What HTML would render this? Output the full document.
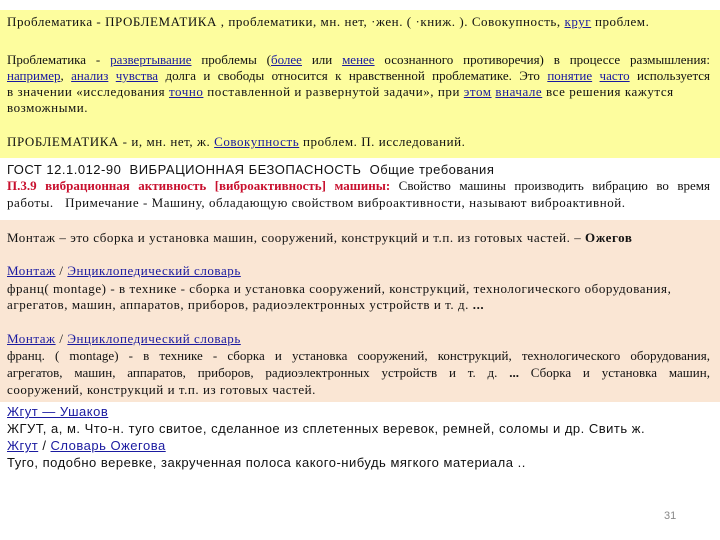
<html><head><style>
body{margin:0;width:720px;height:540px;background:#fff;position:relative;overflow:hidden;font-family:"Liberation Serif",serif;font-size:13px;color:#111}
.l{position:absolute;left:7px;white-space:nowrap;line-height:16px;letter-spacing:0.55px}
a{color:#1a1aa0;text-decoration:underline}
.s{font-family:"Liberation Sans",sans-serif;letter-spacing:0.5px}
.j{white-space:normal;width:703px;text-align:justify;text-align-last:justify;letter-spacing:0}
</style></head><body>
<div style="position:absolute;left:0;top:10px;width:720px;height:148px;background:#fdfd9e"></div>
<div style="position:absolute;left:0;top:220px;width:720px;height:182px;background:#fae6d4"></div>
<div class="l" style="top:14px">Проблематика - ПРОБЛЕМАТИКА , проблематики, мн. нет, ·жен. ( ·книж. ). Совокупность, <a>круг</a> проблем.</div>
<div class="l j" style="top:52px">Проблематика - <a>развертывание</a> проблемы (<a>более</a> или <a>менее</a> осознанного противоречия) в процессе размышления:</div>
<div class="l j" style="top:68px"><a>например</a>, <a>анализ</a> <a>чувства</a> долга и свободы относится к нравственной проблематике. Это <a>понятие</a> <a>часто</a> используется</div>
<div class="l" style="top:84px">в значении «исследования <a>точно</a> поставленной и развернутой задачи», при <a>этом</a> <a>вначале</a> все решения кажутся</div>
<div class="l" style="top:100px">возможными.</div>
<div class="l" style="top:134px">ПРОБЛЕМАТИКА - и, мн. нет, ж. <a>Совокупность</a> проблем. П. исследований.</div>
<div class="l s" style="top:162px;font-size:13px">ГОСТ 12.1.012-90 &nbsp;ВИБРАЦИОННАЯ БЕЗОПАСНОСТЬ &nbsp;Общие требования</div>
<div class="l j" style="top:178px"><b style="color:#c8102e">П.3.9 вибрационная активность [виброактивность] машины:</b> Свойство машины производить вибрацию во время</div>
<div class="l" style="top:195px">работы. &nbsp; Примечание - Машину, обладающую свойством виброактивности, называют виброактивной.</div>
<div class="l" style="top:230px">Монтаж – это сборка и установка машин, сооружений, конструкций и т.п. из готовых частей. – <b>Ожегов</b></div>
<div class="l" style="top:263px"><a>Монтаж</a> / <a>Энциклопедический словарь</a></div>
<div class="l" style="top:281px">франц( montage) - в технике - сборка и установка сооружений, конструкций, технологического оборудования,</div>
<div class="l" style="top:297px">агрегатов, машин, аппаратов, приборов, радиоэлектронных устройств и т. д. <b>...</b></div>
<div class="l" style="top:331px"><a>Монтаж</a> / <a>Энциклопедический словарь</a></div>
<div class="l j" style="top:348px">франц. ( montage) - в технике - сборка и установка сооружений, конструкций, технологического оборудования,</div>
<div class="l j" style="top:365px">агрегатов, машин, аппаратов, приборов, радиоэлектронных устройств и т. д. <b>...</b> Сборка и установка машин,</div>
<div class="l" style="top:382px">сооружений, конструкций и т.п. из готовых частей.</div>
<div class="l s" style="top:404px"><a>Жгут — Ушаков</a></div>
<div class="l s" style="top:421px">ЖГУТ, а, м. Что-н. туго свитое, сделанное из сплетенных веревок, ремней, соломы и др. Свить ж.</div>
<div class="l s" style="top:438px"><a>Жгут</a> / <a>Словарь Ожегова</a></div>
<div class="l s" style="top:455px">Туго, подобно веревке, закрученная полоса какого-нибудь мягкого материала ..</div>
<div class="l s" style="top:508px;left:664px;font-size:11px;color:#888;letter-spacing:0">31</div>
</body></html>
